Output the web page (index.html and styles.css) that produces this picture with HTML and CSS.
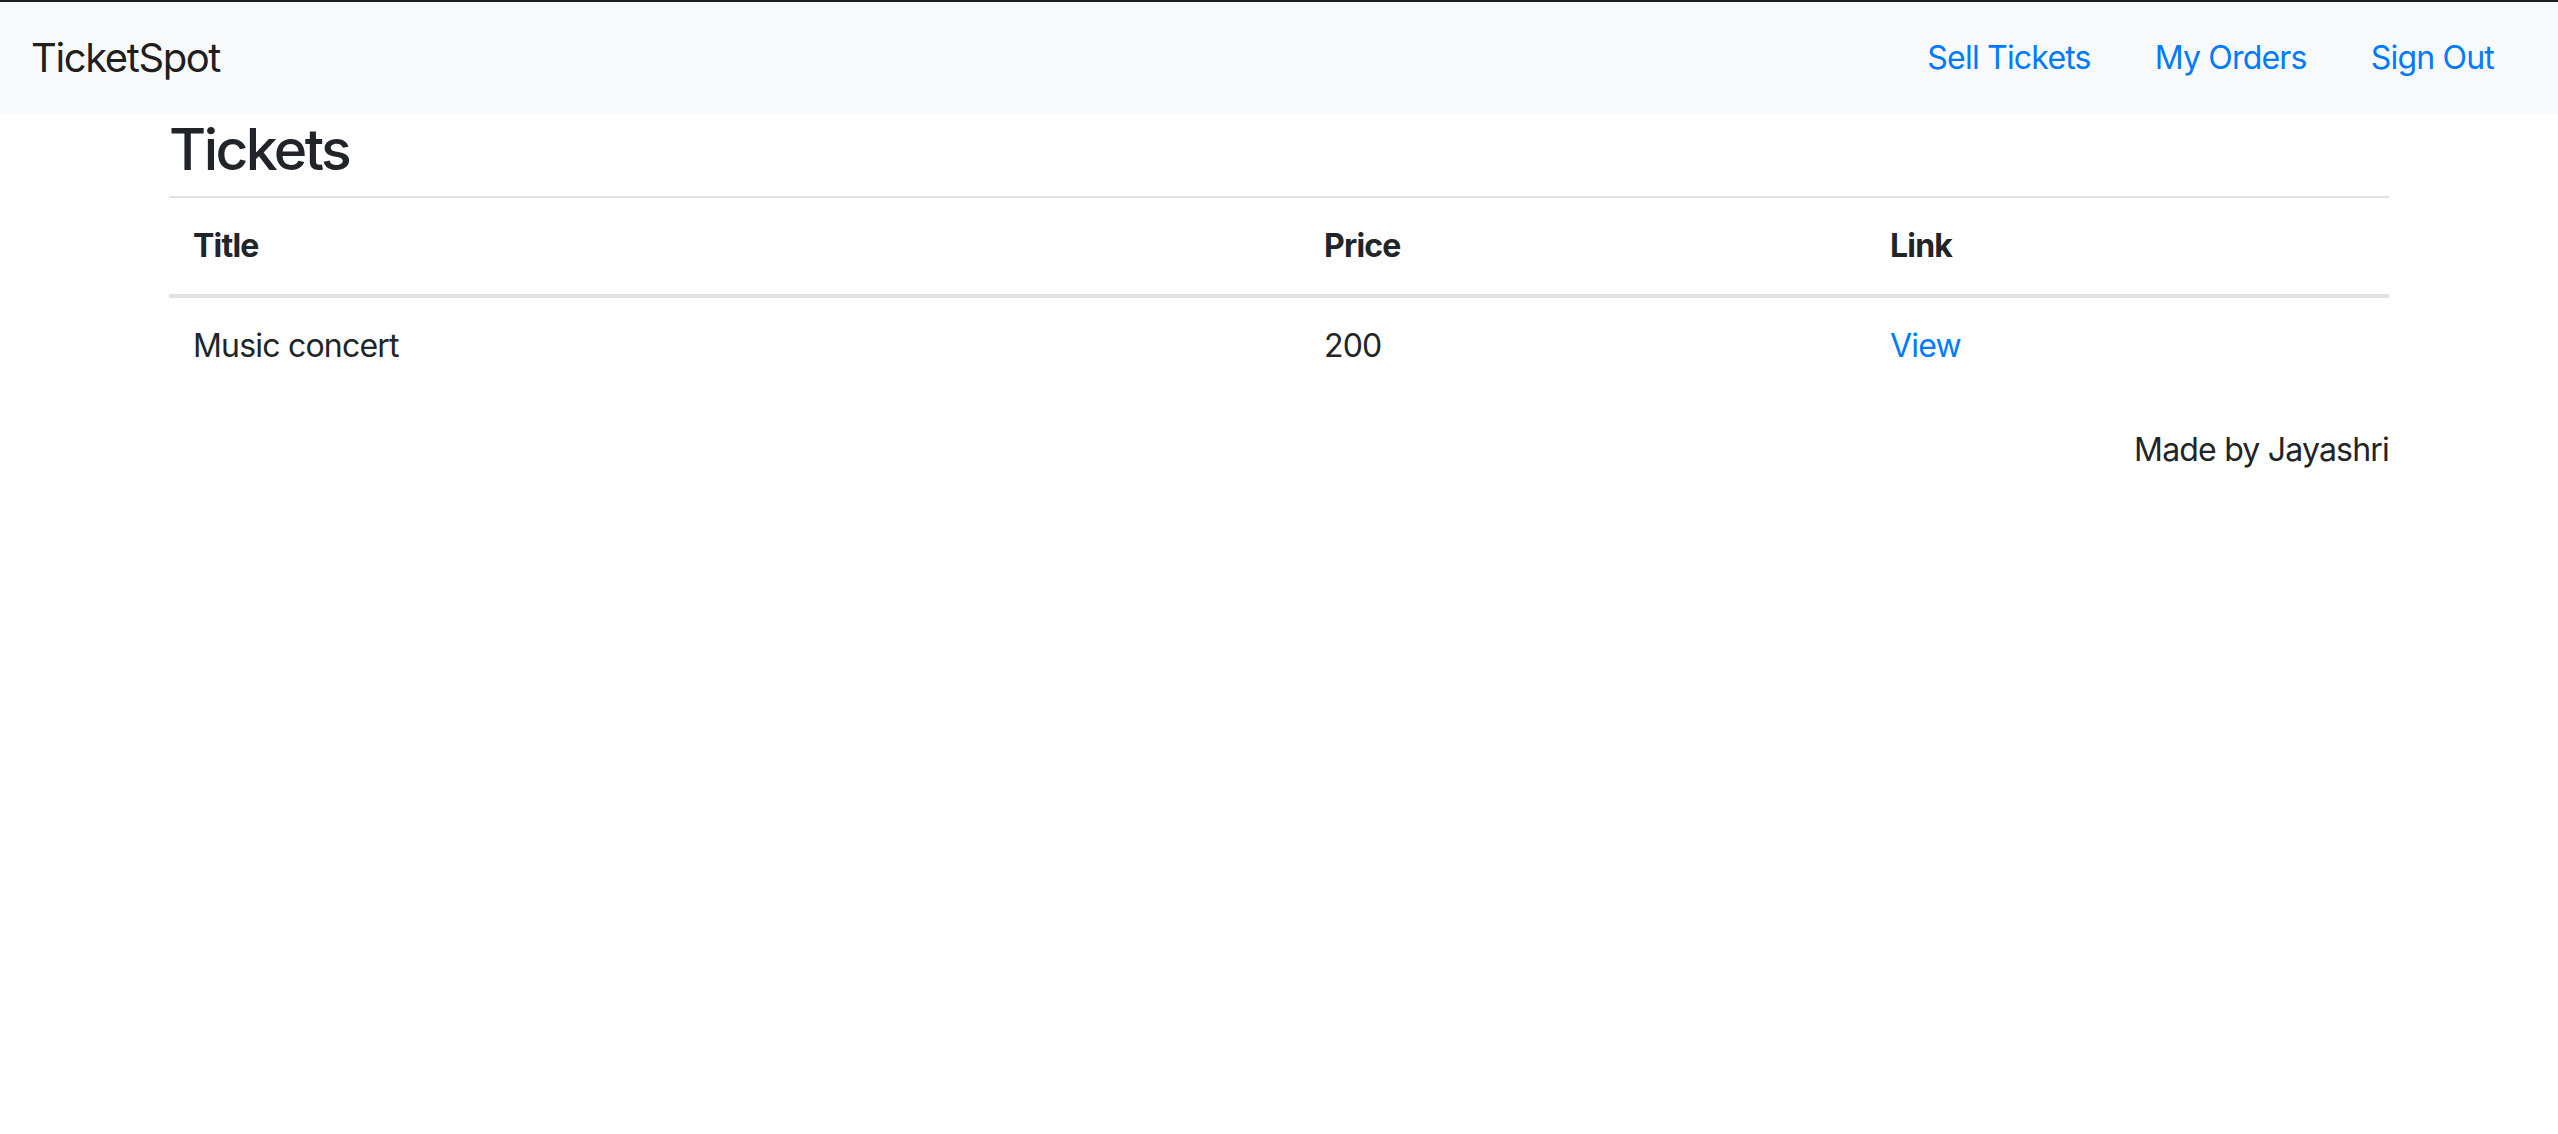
FILE: index.html
```html
<!DOCTYPE html>
<html lang="en">
<head>
<meta charset="utf-8">
<title>TicketSpot</title>
<link rel="stylesheet" href="styles.css">
</head>
<body>
<div class="topline"></div>
<nav class="navbar">
  <a class="brand" href="#">TicketSpot</a>
  <ul class="nav-links">
    <li><a href="#">Sell Tickets</a></li>
    <li><a href="#">My Orders</a></li>
    <li><a href="#">Sign Out</a></li>
  </ul>
</nav>
<main class="container">
  <h1 class="page-title">Tickets</h1>
  <table class="table">
    <thead>
      <tr>
        <th class="col-title">Title</th>
        <th class="col-price">Price</th>
        <th class="col-link">Link</th>
      </tr>
    </thead>
    <tbody>
      <tr>
        <td>Music concert</td>
        <td>200</td>
        <td><a href="#">View</a></td>
      </tr>
    </tbody>
  </table>
  <p class="credit">Made by Jayashri</p>
</main>
</body>
</html>
```
FILE: styles.css
```css
* { box-sizing: border-box; }
html, body { margin: 0; padding: 0; }
body {
  font-family: Inter, "Noto Sans", sans-serif;
  font-size: 32px;
  line-height: 1.5;
  letter-spacing: -0.025em;
  color: #212529;
  background: #fff;
}
a { color: #007bff; text-decoration: none; }

.topline { height: 2px; background: #1c1c1c; }

.navbar {
  display: flex;
  align-items: center;
  height: 112px;
  background: #f8f9fa;
  padding: 0 32px 0 31px;
}
.brand {
  color: rgba(0,0,0,0.9);
  font-size: 40px;
  line-height: 60px;
  letter-spacing: -0.035em;
}
.nav-links {
  list-style: none;
  display: flex;
  margin: 0 0 0 auto;
  padding: 0;
  font-size: 32px;
  line-height: 48px;
}
.nav-links a {
  display: block;
  padding: 0 32px;
}
.nav-links li:last-child a { padding-right: 32px; }

.container {
  width: 2220px;
  margin: 0 auto;
}
.page-title {
  font-size: 57px;
  font-weight: 500;
  line-height: 72px;
  margin: 0 0 10px;
  letter-spacing: -0.045em;
}
.table {
  width: 100%;
  table-layout: fixed;
  border-collapse: collapse;
  margin-bottom: 32px;
}
.table th, .table td {
  padding: 24px;
  text-align: left;
  vertical-align: top;
  border-top: 2px solid #dee2e6;
}
.table thead th {
  border-bottom: 4px solid #dee2e6;
  font-weight: 700;
}
.col-title { width: 1131px; }
.col-price { width: 566px; }
.col-link { width: 523px; }
.credit {
  margin: 0;
  text-align: right;
}
```
